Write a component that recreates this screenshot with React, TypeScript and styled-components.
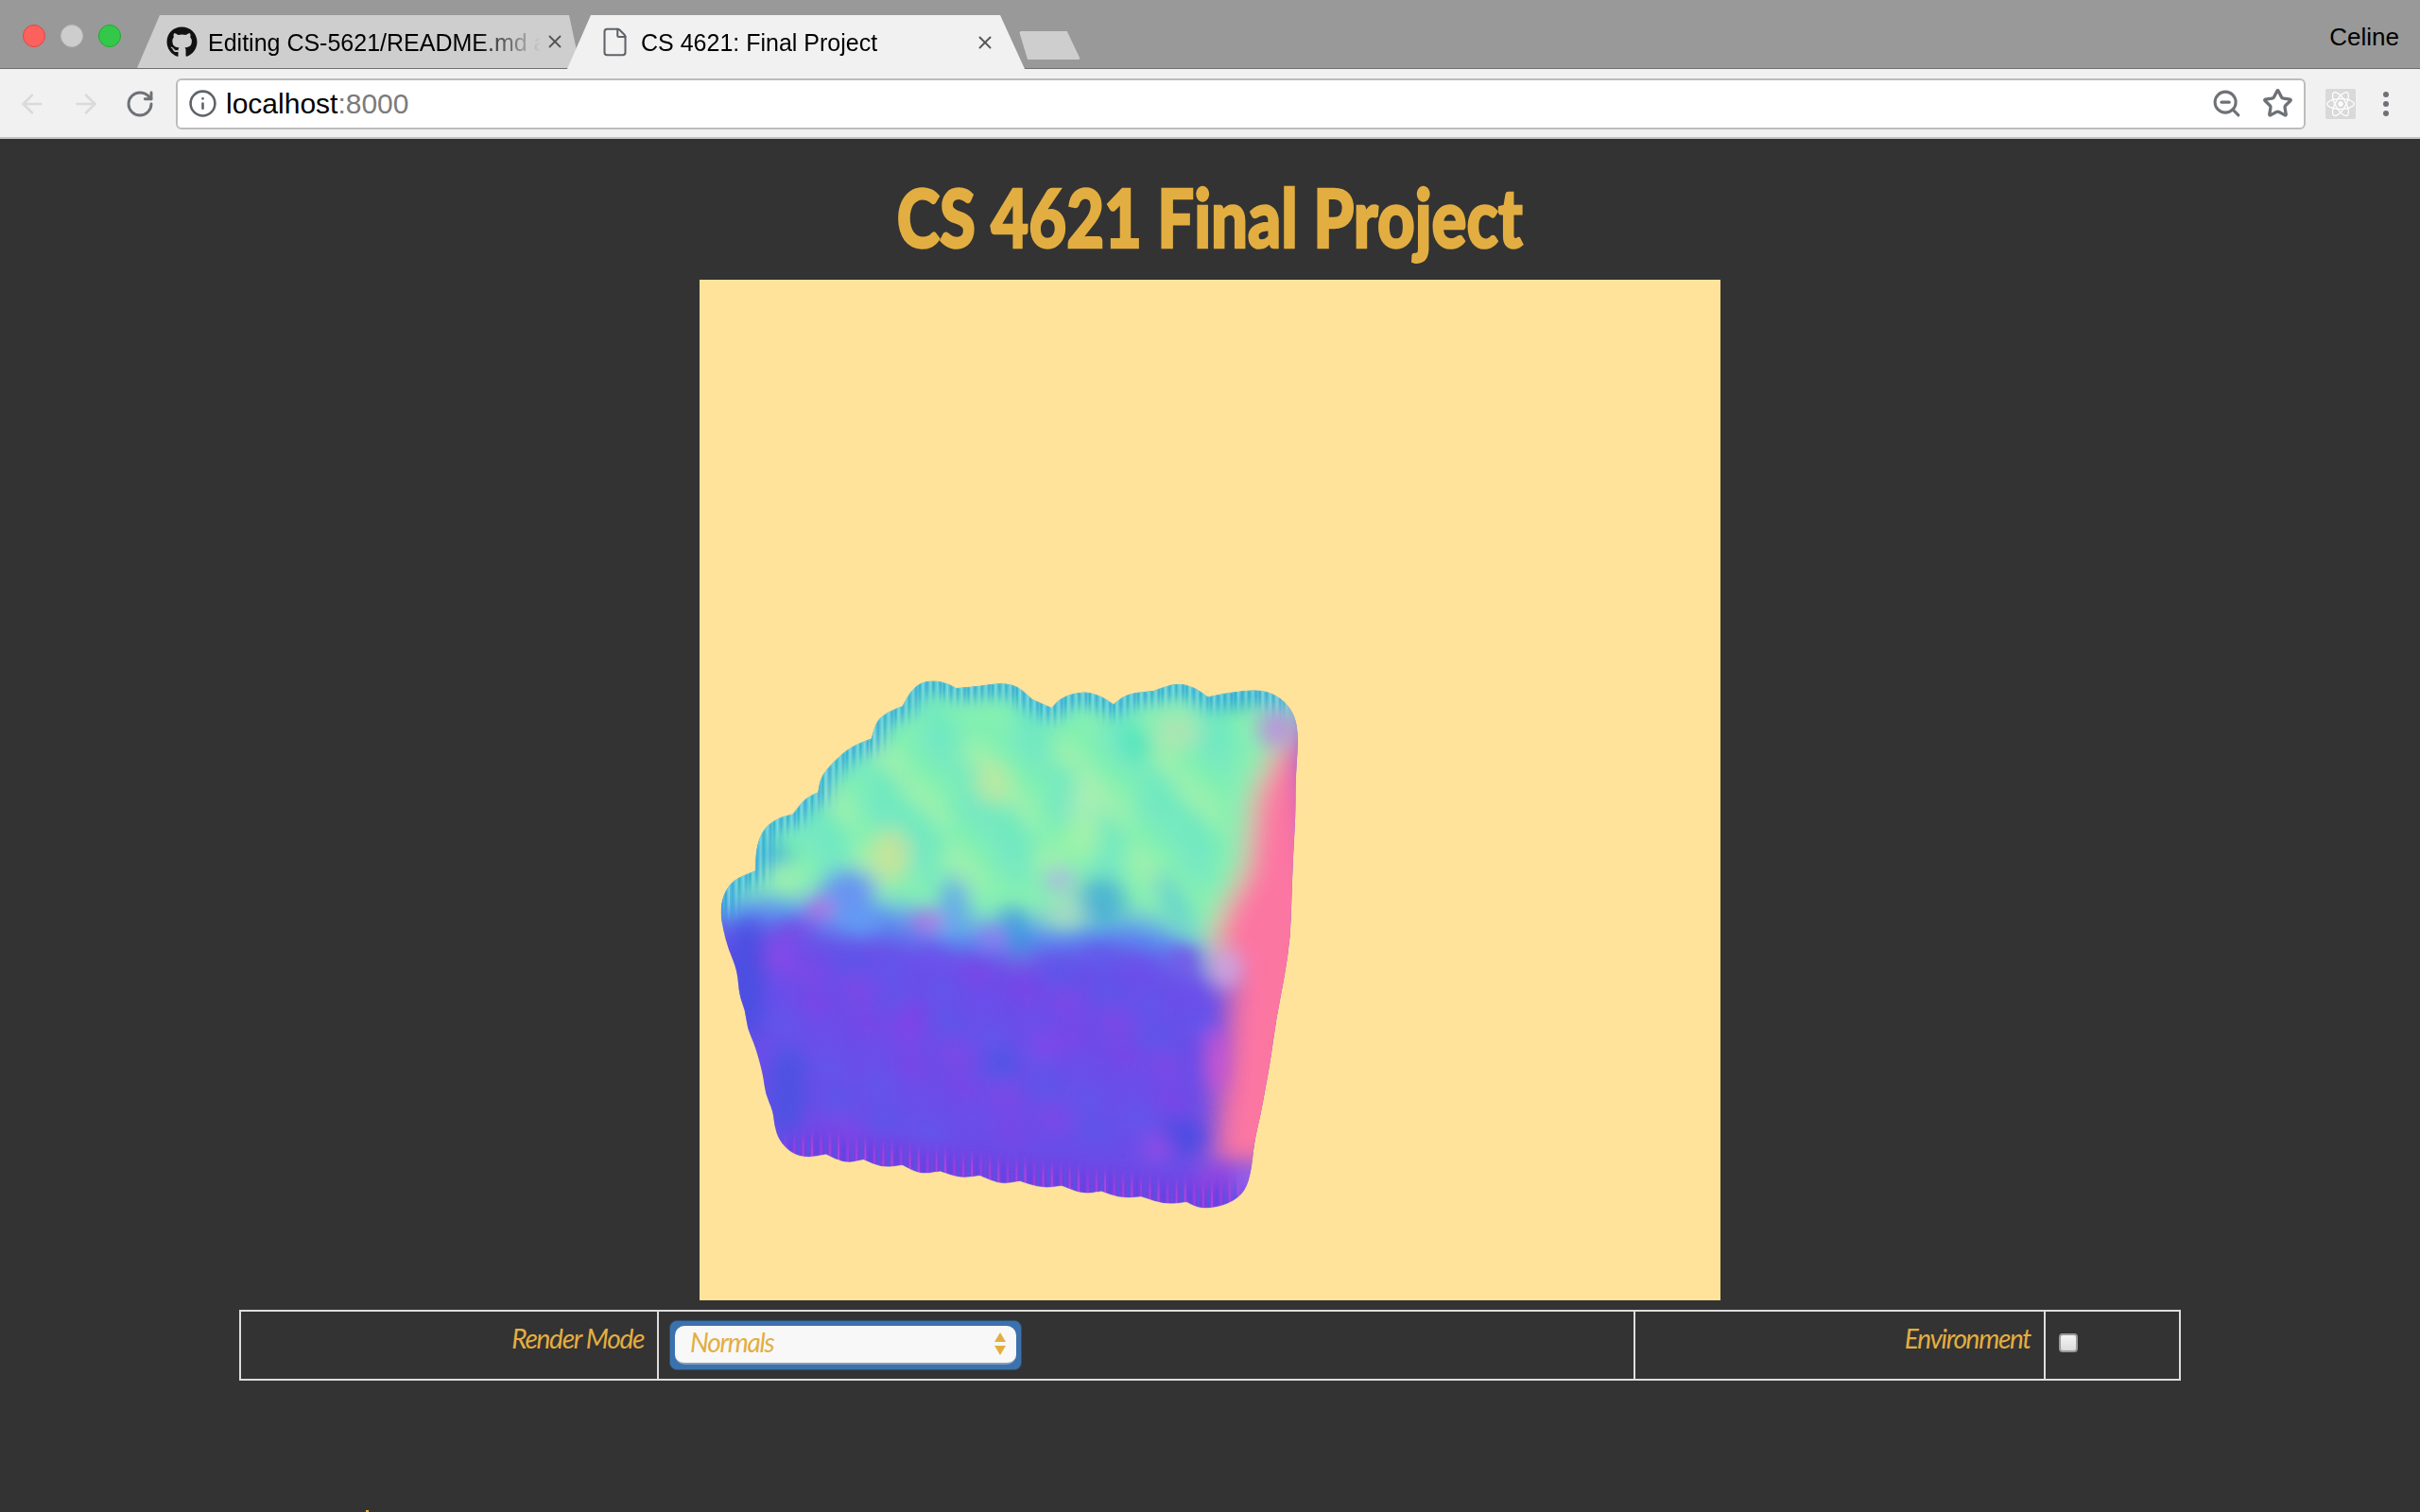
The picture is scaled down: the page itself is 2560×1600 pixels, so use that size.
import React from 'react';
import styled, { createGlobalStyle } from 'styled-components';
import { ArrowLeft, ArrowRight, File, Info, RotateCw, Star, X, ZoomOut } from 'lucide-react';
import { FaGithub, FaReact } from 'react-icons/fa';

type Point = [number, number];
type Mottle = [number, number, number, number, number, string];

// outline of the rendered cube, one list per side. a point listed twice is a sharp notch
const topEdge: Point[] = [
  [52, 720], [60, 670], [85, 630], [140, 605], [140, 605], [143, 540], [160, 490], [195, 460], [235, 448], [235, 448],
  [265, 405], [298, 388], [298, 388], [305, 345], [335, 305], [380, 262], [432, 240], [432, 240], [445, 190], [475, 165],
  [510, 150], [510, 150], [530, 110], [555, 85], [590, 78], [625, 88], [645, 100], [645, 100], [700, 95], [760, 85],
  [800, 95], [835, 130], [835, 130], [885, 155], [885, 155], [910, 125], [965, 108], [1010, 122], [1040, 145], [1040, 145], [1075, 115],
  [1140, 108], [1145, 106], [1200, 85], [1245, 98], [1278, 125], [1278, 125], [1330, 112], [1410, 103], [1460, 125], [1495, 170],
];
const rightEdge: Point[] = [
  [1505, 230], [1502, 290], [1498, 360], [1498, 450], [1492, 560], [1488, 680], [1485, 790],
  [1470, 900], [1450, 1010], [1435, 1130], [1420, 1220], [1410, 1280], [1395, 1350], [1385, 1450],
];
const bottomEdge: Point[] = [
  [1365, 1500], [1320, 1530], [1260, 1540], [1225, 1520], [1225, 1520], [1170, 1527], [1110, 1505], [1110, 1505], [1060, 1510],
  [1010, 1490], [1010, 1490], [965, 1498], [910, 1475], [910, 1475], [860, 1482], [805, 1462], [805, 1462], [755, 1471],
  [705, 1447], [705, 1447], [655, 1454], [605, 1435], [605, 1435], [555, 1443], [510, 1418], [510, 1418], [460, 1425],
  [412, 1403], [412, 1403], [365, 1413], [318, 1388], [318, 1388], [270, 1398], [230, 1385], [200, 1350],
];
const leftEdge: Point[] = [
  [188, 1310], [185, 1270], [165, 1220], [160, 1170], [140, 1090], [120, 1040], [115, 990],
  [100, 950], [95, 880], [72, 820], [60, 770],
];

const seam: Point[] = [
  [40, 725], [200, 715], [320, 735], [450, 730], [600, 785], [800, 795], [1000, 775], [1100, 775],
  [1200, 815], [1300, 920],
];

const pinkSide: Point[] = [
  [1510, 190], [1450, 270], [1395, 400], [1375, 600], [1315, 720], [1290, 800], [1335, 920],
  [1320, 1100], [1300, 1300], [1290, 1420], [1500, 1420], [1568, 800],
];

// the bumps of the surface, laid out on a slanted lattice
const latticeColors = {
  top: ['#6ae8c2', '#a2f0ac', '#7ef0b0', '#74e6c6'],
  front: ['#7c46e6', '#5c58ea', '#6c50ec', '#8048e6', '#6258ec'],
};

function buildLattice(): Mottle[] {
  const out: Mottle[] = [];
  for (let v = 0; v < 7; v++) {
    for (let u = 0; u < 12; u++) {
      const x = 150 + u * 115 - v * 12;
      const y = 210 + v * 72 + (u % 2) * 30;
      if (y > 640 || x > 1340) continue;
      const color = latticeColors.top[(u * 2 + v * 3) % 4];
      out.push([x, y, 34, 84, -28, color]);
    }
  }
  for (let v = 0; v < 6; v++) {
    for (let u = 0; u < 11; u++) {
      const x = 170 + u * 105 + v * 18;
      const y = 850 + v * 88 + (u % 2) * 34;
      if (y > 1340 || x > 1260) continue;
      const color = latticeColors.front[(u * 3 + v * 2) % 5];
      out.push([x, y, 46, 34, 30, color]);
    }
  }
  return out;
}

const mottles: Mottle[] = [
  ...buildLattice(),
  [480, 560, 48, 70, 0, '#cfe296'],
  [735, 360, 44, 62, 0, '#bfe8a0'],
  [1200, 220, 60, 52, 0, '#b2e4b4'],
  [970, 430, 40, 95, 0, '#aeeeb4'],
  [960, 520, 50, 55, 0, '#a3f3a6'],
  [1100, 255, 34, 50, -25, '#46e4bd'],
  [190, 560, 46, 30, 0, '#38b0da'],
  [375, 660, 72, 60, 0, '#6488f8'],
  [400, 745, 60, 36, 0, '#649df6'],
  [640, 705, 38, 85, 0, '#62a2f0'],
  [795, 780, 32, 80, -10, '#3a96e0'],
  [1010, 690, 60, 70, 0, '#44acd6'],
  [920, 725, 50, 44, 0, '#addcc0'],
  [1190, 690, 26, 90, -25, '#62ccd4'],
  [905, 630, 36, 32, 0, '#aca8ec'],
  [300, 712, 32, 30, 0, '#cc58e0'],
  [570, 748, 38, 28, 0, '#cc5ce6'],
  [735, 790, 30, 28, 0, '#ac72f4'],
  [1325, 875, 38, 56, 0, '#cca6e8'],
  [1450, 210, 46, 56, 0, '#bd88e0'],
  [1330, 130, 70, 30, 0, '#28b0c4'],
  [200, 840, 34, 56, 0, '#8c4ae8'],
  [240, 775, 48, 28, 0, '#7c42e4'],
  [530, 1010, 36, 46, 0, '#8440e6'],
  [870, 1090, 38, 32, 0, '#8844e8'],
  [760, 1130, 40, 36, 0, '#4c56e4'],
  [120, 900, 52, 170, 0, '#4650e0'],
  [225, 1220, 48, 120, 0, '#4654e2'],
  [1210, 1340, 56, 48, 0, '#464ce0'],
  [1150, 1372, 34, 44, 0, '#964ee6'],
  [1310, 1490, 84, 70, 0, '#9a46e2'],
  [1378, 1470, 20, 50, 0, '#a474f2'],
  [1300, 1130, 26, 90, 0, '#d452d4'],
];

// smooth closed or open path through the points, by midpoints
function smoothPath(points: Point[], closed = false) {
  const mid = (a: Point, b: Point) => `${(a[0] + b[0]) / 2} ${(a[1] + b[1]) / 2}`;
  if (closed) {
    let d = `M${mid(points[points.length - 1], points[0])}`;
    points.forEach((p, i) => {
      d += ` Q${p[0]} ${p[1]} ${mid(p, points[(i + 1) % points.length])}`;
    });
    return `${d}Z`;
  }
  let d = `M${points[0][0]} ${points[0][1]}`;
  for (let i = 1; i < points.length - 1; i++) {
    d += ` Q${points[i][0]} ${points[i][1]} ${mid(points[i], points[i + 1])}`;
  }
  return d;
}

const outline = smoothPath([...topEdge, ...rightEdge, ...bottomEdge, ...leftEdge], true);
const polygon = (points: Point[]) => points.map((p) => p.join(',')).join(' ');

function CubeRender() {
  const greenFace: Point[] = [[0, 0], [1568, 0], [1510, 190], [1450, 270], [1395, 400], [1375, 600], [1315, 720], [1300, 920], ...[...seam].reverse()];
  return (
    <CubeSvg viewBox="0 0 1080 1080">
      <defs>
        <clipPath id="cube-outline">
          <path d={outline} />
        </clipPath>
        <filter id="soft" filterUnits="userSpaceOnUse" x="-100" y="-100" width="1800" height="1800">
          <feGaussianBlur stdDeviation="36" />
        </filter>
        <filter id="softer" filterUnits="userSpaceOnUse" x="-100" y="-100" width="1800" height="1800">
          <feGaussianBlur stdDeviation="26" />
        </filter>
        <filter id="fade" filterUnits="userSpaceOnUse" x="-100" y="-100" width="1800" height="1800">
          <feGaussianBlur stdDeviation="18" />
        </filter>
        <pattern id="top-stripes" width="61" height="40" patternUnits="userSpaceOnUse">
          <rect x="2" width="5" height="40" fill="#0e9cc0" opacity=".55" />
          <rect x="11" width="3" height="40" fill="#ffffff" opacity=".4" />
          <rect x="19" width="6" height="40" fill="#2a8fd6" opacity=".5" />
          <rect x="30" width="3" height="40" fill="#d4f4ee" opacity=".45" />
          <rect x="37" width="4" height="40" fill="#0a94b0" opacity=".55" />
          <rect x="47" width="3" height="40" fill="#ffffff" opacity=".3" />
          <rect x="54" width="5" height="40" fill="#2f7fe0" opacity=".45" />
        </pattern>
        <pattern id="bottom-stripes" width="67" height="40" patternUnits="userSpaceOnUse">
          <rect x="3" width="5" height="40" fill="#3468e0" opacity=".8" />
          <rect x="13" width="3" height="40" fill="#ee58d4" opacity=".7" />
          <rect x="24" width="6" height="40" fill="#4450e2" opacity=".65" />
          <rect x="36" width="3" height="40" fill="#c448e0" opacity=".7" />
          <rect x="46" width="4" height="40" fill="#2f70dc" opacity=".7" />
          <rect x="58" width="3" height="40" fill="#f05ac8" opacity=".55" />
        </pattern>
        <mask id="top-rim" maskUnits="userSpaceOnUse" x="0" y="0" width="1568" height="1568">
          <path d={smoothPath(topEdge)} fill="none" stroke="#fff" strokeWidth="60" filter="url(#fade)" />
        </mask>
        <mask id="bottom-rim" maskUnits="userSpaceOnUse" x="0" y="0" width="1568" height="1568">
          <path d={smoothPath(bottomEdge)} fill="none" stroke="#fff" strokeWidth="90" filter="url(#fade)" />
        </mask>
      </defs>
      <g transform="translate(0 394) scale(.4209 .3827)" clipPath="url(#cube-outline)">
        <rect width="1568" height="1568" fill="#6a4de8" />
        <g filter="url(#soft)">
          <polygon points={polygon(greenFace)} fill="#86f0b2" />
          <path d={smoothPath(seam)} fill="none" stroke="#5a8cf0" strokeWidth="90" />
          <polygon points={polygon(pinkSide)} fill="#fc76a2" />
        </g>
        <g filter="url(#softer)">
          {mottles.map(([cx, cy, rx, ry, rot, fill], i) => (
            <ellipse key={i} cx={cx} cy={cy} rx={rx} ry={ry} fill={fill} opacity={0.85} transform={`rotate(${rot} ${cx} ${cy})`} />
          ))}
          <path d={smoothPath(topEdge)} fill="none" stroke="#46bce0" strokeWidth="56" />
          <path d={smoothPath(bottomEdge)} fill="none" stroke="#7a3ce2" strokeWidth="110" />
        </g>
        <rect width="1568" height="1568" fill="url(#top-stripes)" mask="url(#top-rim)" />
        <rect width="1568" height="1568" fill="url(#bottom-stripes)" mask="url(#bottom-rim)" />
      </g>
    </CubeSvg>
  );
}

function App() {
  return (
    <>
      <GlobalStyle />
      <TabStrip>
        <Lights>
          <Light $color="#fc615d" $edge="#df4744" />
          <Light $color="#cdcdcd" $edge="#bcbcbc" />
          <Light $color="#34c84a" $edge="#1dad2b" />
        </Lights>
        <Tabs>
          <BackTab>
            <FaGithub size={33} color="#111" />
            <TabTitle>Editing CS-5621/README.md a</TabTitle>
            <TabClose size={22} strokeWidth={2} />
          </BackTab>
          <FrontTab>
            <File size={33} strokeWidth={1.5} color="#5f6368" />
            <TabTitle>CS 4621: Final Project</TabTitle>
            <TabClose size={22} strokeWidth={2} />
          </FrontTab>
          <NewTab />
        </Tabs>
        <Profile>Celine</Profile>
      </TabStrip>
      <Toolbar>
        <NavButton $faded>
          <ArrowLeft size={32} strokeWidth={2} />
        </NavButton>
        <NavButton $faded>
          <ArrowRight size={32} strokeWidth={2} />
        </NavButton>
        <NavButton>
          <RotateCw size={32} strokeWidth={2.2} />
        </NavButton>
        <AddressBar>
          <Info size={31} strokeWidth={2} color="#5f6368" />
          <Url>
            localhost<Port>:8000</Port>
          </Url>
          <AddressActions>
            <ZoomOut size={33} strokeWidth={2.2} color="#6e7276" />
            <Star size={33} strokeWidth={2.4} color="#6e7276" />
          </AddressActions>
        </AddressBar>
        <Extension>
          <FaReact size={30} color="#ffffff" />
        </Extension>
        <MenuDots>
          <i />
          <i />
          <i />
        </MenuDots>
      </Toolbar>
      <Page>
        <Title>CS 4621 Final Project</Title>
        <Viewport>
          <CubeRender />
        </Viewport>
        <Controls>
          <tbody>
            <tr>
              <LabelCell $width={442}>Render Mode</LabelCell>
              <FieldCell $width={1033}>
                <SelectWrap>
                  <ModeSelect defaultValue="normals">
                    <option value="normals">Normals</option>
                  </ModeSelect>
                  <ArrowUp />
                  <ArrowDown />
                </SelectWrap>
              </FieldCell>
              <LabelCell $width={434}>Environment</LabelCell>
              <CheckCell $width={143}>
                <Toggle type="checkbox" />
              </CheckCell>
            </tr>
          </tbody>
        </Controls>
        <ClippedMark />
      </Page>
    </>
  );
}

export default App;

const GlobalStyle = createGlobalStyle`
  html, body {
    margin: 0;
    height: 100%;
    overflow: hidden;
    background: #333333;
  }
  * {
    box-sizing: border-box;
  }
`;

const TabStrip = styled.header`
  height: 73px;
  display: flex;
  background: #999999;
  border-bottom: 1px solid #6f6f6f;
  font-family: 'Liberation Sans', Arial, sans-serif;
`;

const Lights = styled.div`
  display: flex;
  gap: 16px;
  padding: 26px 0 0 24px;
`;

const Light = styled.span<{ $color: string; $edge: string }>`
  width: 24px;
  height: 24px;
  border-radius: 50%;
  background: ${(p) => p.$color};
  border: 1px solid ${(p) => p.$edge};
`;

const Tabs = styled.div`
  display: flex;
  align-items: flex-end;
  margin-left: 17px;
  height: 72px;
`;

const BackTab = styled.div`
  width: 469px;
  height: 56px;
  display: flex;
  align-items: center;
  padding: 0 16px 0 31px;
  background: #cecece;
  clip-path: polygon(0 100%, 24px 0, 457px 0, 100% 100%);
`;

const FrontTab = styled.div`
  width: 484px;
  height: 57px;
  margin-left: -14px;
  margin-bottom: -1px;
  display: flex;
  align-items: center;
  padding: 0 31px 0 34px;
  background: #f1f1f1;
  clip-path: polygon(0 100%, 25px 0, 458px 0, 100% 100%);
`;

const TabTitle = styled.span`
  flex: 1;
  min-width: 0;
  margin-left: 11px;
  padding-top: 2px;
  font-size: 25px;
  color: #000000;
  white-space: nowrap;
  mask-image: linear-gradient(to right, #000 80%, transparent 100%);
`;

const TabClose = styled(X)`
  flex: none;
  margin-left: 4px;
  color: #555555;
`;

const NewTab = styled.div`
  width: 65px;
  height: 30px;
  margin: 0 0 9px -6px;
  background: #cecece;
  border-radius: 3px;
  clip-path: polygon(0 0, 78% 0, 100% 100%, 14% 100%);
`;

const Profile = styled.div`
  margin-left: auto;
  padding: 24px 22px 0 0;
  font-size: 26px;
  line-height: 30px;
  color: #000000;
`;

const Toolbar = styled.div`
  height: 74px;
  display: flex;
  align-items: center;
  padding: 1px 0 0 6px;
  background: #f1f1f1;
  border-bottom: 2px solid #c4c4c4;
  font-family: 'Liberation Sans', Arial, sans-serif;
`;

const NavButton = styled.span<{ $faded?: boolean }>`
  width: 56px;
  display: flex;
  justify-content: center;
  margin-right: 1px;
  color: ${(p) => (p.$faded ? '#dadada' : '#6e7276')};
`;

const AddressBar = styled.div`
  width: 2253px;
  height: 54px;
  margin-left: 9px;
  display: flex;
  align-items: center;
  padding: 0 0 0 11px;
  background: #ffffff;
  border: 2px solid #bcbcbc;
  border-radius: 6px;
`;

const Url = styled.span`
  margin-left: 9px;
  padding-top: 1px;
  font-size: 30px;
  color: #000000;
`;

const Port = styled.span`
  color: #7b7b7b;
`;

const AddressActions = styled.div`
  margin-left: auto;
  display: flex;
  align-items: center;
  gap: 21px;
  padding-right: 11px;
`;

const Extension = styled.div`
  width: 32px;
  height: 32px;
  margin-left: 21px;
  display: flex;
  align-items: center;
  justify-content: center;
  background: #d9d9d9;
  border-radius: 2px;
`;

const MenuDots = styled.div`
  display: flex;
  flex-direction: column;
  gap: 4px;
  margin-left: 29px;
  i {
    width: 6px;
    height: 6px;
    border-radius: 50%;
    background: #6e7276;
  }
`;

const Page = styled.main`
  position: relative;
  height: 1453px;
  display: flex;
  flex-direction: column;
  align-items: center;
  background: #333333;
`;

const Title = styled.h1`
  height: 149px;
  margin: 0;
  padding-top: 37px;
  font-family: Lato, sans-serif;
  font-weight: 900;
  font-size: 86px;
  line-height: 90px;
  color: #e3ae41;
  white-space: nowrap;
  -webkit-text-stroke: 2.5px #e3ae41;
  transform: scaleX(0.8);
`;

const Viewport = styled.div`
  width: 1080px;
  height: 1080px;
  flex: none;
  background: #ffe39b;
`;

const CubeSvg = styled.svg`
  display: block;
  width: 100%;
  height: 100%;
`;

const Controls = styled.table`
  width: 2050px;
  height: 73px;
  margin-top: 10px;
  border-collapse: collapse;
  table-layout: fixed;
  border: 2px solid #dddddd;
  font-family: Lato, sans-serif;
  font-style: italic;
  font-size: 28px;
  letter-spacing: -1.3px;
  color: #e3ae41;
`;

const Cell = styled.td<{ $width: number }>`
  width: ${(p) => p.$width}px;
  height: 73px;
  padding: 0;
  border: 2px solid #dddddd;
`;

const LabelCell = styled(Cell)`
  padding: 0 14px 16px 0;
  text-align: right;
`;

const FieldCell = styled(Cell)`
  padding-left: 11px;
`;

const CheckCell = styled(Cell)`
  padding: 0 0 6px 14px;
`;

const SelectWrap = styled.div`
  position: relative;
  width: 373px;
  height: 53px;
  padding: 5px;
  background: #3b72ae;
  border: 1px solid #2f5075;
  border-radius: 8px;
`;

const ModeSelect = styled.select`
  display: block;
  width: 100%;
  height: 100%;
  padding: 0 0 5px 16px;
  appearance: none;
  background: #f8f8f8;
  border: none;
  border-bottom: 2px solid #8a9fb4;
  border-radius: 10px;
  outline: none;
  font: inherit;
  letter-spacing: inherit;
  color: #e3ae41;
`;

const ArrowUp = styled.span`
  position: absolute;
  right: 16px;
  top: 12px;
  border-left: 6px solid transparent;
  border-right: 6px solid transparent;
  border-bottom: 10px solid #e3ae41;
`;

const ArrowDown = styled.span`
  position: absolute;
  right: 16px;
  top: 26px;
  border-left: 6px solid transparent;
  border-right: 6px solid transparent;
  border-top: 10px solid #e3ae41;
`;

const Toggle = styled.input`
  display: block;
  width: 20px;
  height: 20px;
  margin: 0;
  appearance: none;
  background: linear-gradient(#f4f4f4, #dcdcdc);
  border: 2px solid #9a9a9a;
  border-radius: 4px;
`;

const ClippedMark = styled.span`
  position: absolute;
  left: 387px;
  bottom: 0;
  width: 3px;
  height: 2px;
  background: #e3ae41;
`;
